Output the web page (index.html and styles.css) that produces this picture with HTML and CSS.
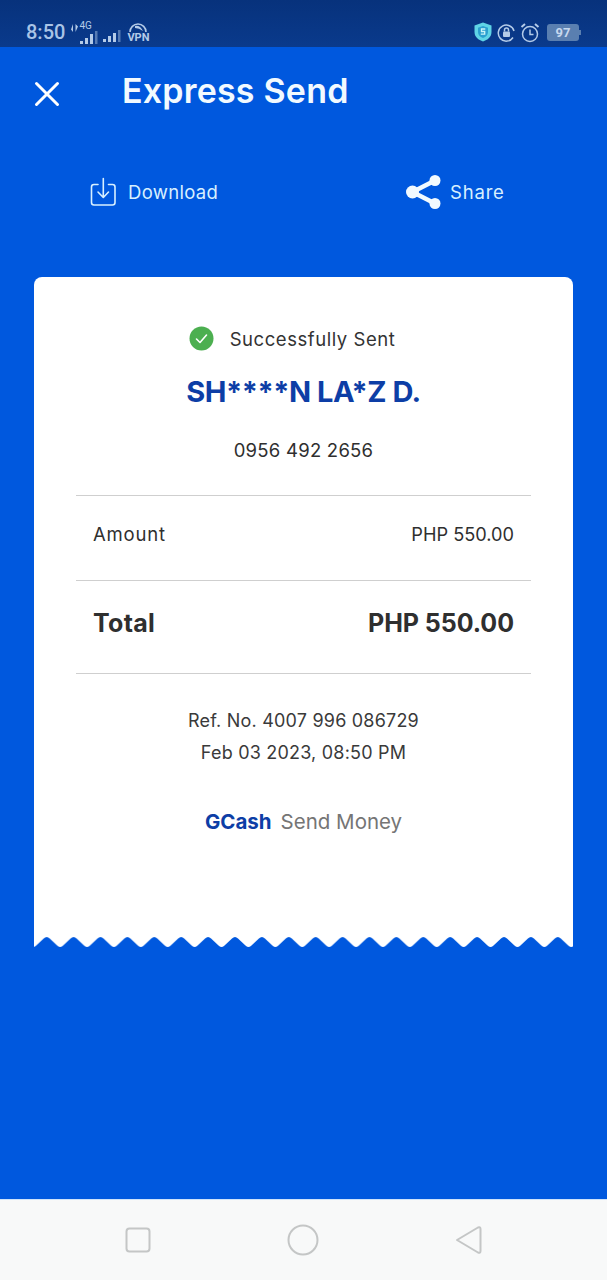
FILE: index.html
```html
<!DOCTYPE html>
<html lang="en">
<head>
    <meta charset="UTF-8">
    <meta name="viewport" content="width=device-width, initial-scale=1.0">
    <title>Express Send</title>
    <link rel="stylesheet" href="styles.css">
</head>
<body>
    <div class="status">
        <div class="status-left">
            <span class="time">8:50</span>
            <svg class="data-dot" width="7" height="8" viewBox="0 0 7 8"><path d="M2 0 V8 L0 5.500 Z M4.500 8 V0 L7 2.500 Z"/></svg>
            <span class="net">
                <span class="net-label">4G</span>
                <svg width="20" height="16" viewBox="0 0 20 16"><rect x="2" y="12" width="3" height="3"/><rect x="7" y="9" width="3" height="6"/><rect x="12" y="5" width="3" height="10"/><rect x="17" y="2" width="2.500" height="13" opacity=".45"/></svg>
            </span>
            <svg class="bars" width="20" height="14" viewBox="0 0 20 14"><rect x="0" y="10" width="3" height="3"/><rect x="5" y="7" width="3" height="6"/><rect x="10" y="4" width="3" height="9"/><rect x="15" y="1" width="2.500" height="12" opacity=".45"/></svg>
            <span class="vpn">
                <svg width="20" height="10" viewBox="0 0 20 10"><path d="M2 10 A8 8 0 0 1 18 10" fill="none" stroke="currentColor" stroke-width="1.600"/><path d="M7 4 Q12 3 15 9 Q11 6 7 6 Z" fill="currentColor"/></svg>
                <span class="vpn-label">VPN</span>
            </span>
        </div>
        <div class="status-right">
            <svg width="20" height="22" viewBox="0 0 20 22"><path d="M10 1.500 L18.500 4.500 V11 C18.500 16 14.500 19 10 20.500 C5.500 19 1.500 16 1.500 11 V4.500 Z" fill="#5fd4e6"/><path d="M10 5 L15 6.800 V11 C15 14 13 15.800 10 17 C7 15.800 5 14 5 11 V6.800 Z" fill="#2a9fd0"/><path d="M12.300 8 H8.500 V10.500 H11.700 V13.200 H7.800" fill="none" stroke="#c9f3f8" stroke-width="1.300"/></svg>
            <svg width="19" height="19" viewBox="0 0 19 19" fill="none" stroke="#b4cbe8" stroke-width="1.500"><path d="M16 14.500 A8 8 0 1 1 17 8"/><rect x="6" y="8.500" width="7" height="5.500" rx="1" fill="#b4cbe8" stroke="none"/><path d="M7.500 8.500 V7 A2 2 0 0 1 11.500 7 V8.500"/></svg>
            <svg width="20" height="21" viewBox="0 0 20 21" fill="none" stroke="#b4cbe8" stroke-width="1.500"><circle cx="10" cy="12" r="7.500"/><path d="M10 7.500 V12.500 H13.500"/><path d="M1.500 5 L5 2 M18.500 5 L15 2" stroke-width="2"/></svg>
            <span class="battery"><span class="battery-level">97</span><span class="battery-tip"></span></span>
        </div>
    </div>

    <main class="screen">
        <header class="title-row">
            <button class="close" aria-label="Close">
                <svg width="26" height="26" viewBox="0 0 26 26" fill="none" stroke="#fff" stroke-width="3" stroke-linecap="round"><path d="M2.500 2.500 L23.500 23.500 M23.500 2.500 L2.500 23.500"/></svg>
            </button>
            <h1>Express Send</h1>
        </header>

        <div class="actions">
            <div class="action action-download">
                <svg width="28" height="30" viewBox="0 0 28 30" fill="none" stroke="#d8f0ff" stroke-width="1.600" stroke-linecap="round" stroke-linejoin="round"><path d="M8 7.500 H4 A2.500 2.500 0 0 0 1.500 10 V25.500 A2.500 2.500 0 0 0 4 28 H22.500 A2.500 2.500 0 0 0 25 25.500 V10 A2.500 2.500 0 0 0 22.500 7.500 H18.500"/><path d="M13.300 1.500 V20 M8 15 L13.300 20.500 L18.500 15"/></svg>
                <span>Download</span>
            </div>
            <div class="action action-share">
                <svg width="36" height="34" viewBox="0 0 36 34" fill="#f2faff"><circle cx="6.500" cy="17" r="6.500"/><circle cx="29" cy="5.500" r="5.500"/><circle cx="29" cy="28.500" r="5.500"/><path d="M6.500 17 L29 5.500 M6.500 17 L29 28.500" stroke="#f2faff" stroke-width="4.500"/></svg>
                <span>Share</span>
            </div>
        </div>

        <section class="receipt">
            <div class="receipt-body">
                <div class="sent">
                    <svg width="25" height="25" viewBox="0 0 25 25"><circle cx="12.500" cy="12.500" r="12" fill="#4caf50"/><path d="M7.500 13 L11 16.500 L17.500 9" fill="none" stroke="#fff" stroke-width="1.600" stroke-linecap="round" stroke-linejoin="round"/></svg>
                    <span>Successfully Sent</span>
                </div>
                <div class="name">SH****N LA*Z D.</div>
                <div class="phone">0956 492 2656</div>

                <div class="row row-amount">
                    <span class="row-label">Amount</span>
                    <span class="row-value">PHP 550.00</span>
                </div>
                <div class="row row-total">
                    <span>Total</span>
                    <span class="total-value">PHP 550.00</span>
                </div>

                <div class="ref">
                    <div>Ref. No. 4007 996 086729</div>
                    <div>Feb 03 2023, 08:50 PM</div>
                </div>
                <div class="brand"><b>GCash</b><span>Send Money</span></div>
            </div>
            <svg class="tear" width="539" height="11" viewBox="0 0 539 11">
                <defs>
                    <pattern id="teeth" x="12.700" y="0" width="26.900" height="11" patternUnits="userSpaceOnUse">
                        <path d="M0 0 Q1.500 0 3 1.500 L11 9 Q13.450 11 15.900 9 L23.900 1.500 Q25.400 0 26.900 0 Z" fill="#fff"/>
                    </pattern>
                </defs>
                <rect width="539" height="11" fill="url(#teeth)"/>
            </svg>
        </section>
    </main>

    <nav class="navbar">
        <svg width="26" height="26" viewBox="0 0 26 26"><rect x="1.500" y="1.500" width="23" height="23" rx="3" fill="none" stroke="#c4c6c6" stroke-width="2"/></svg>
        <svg width="32" height="32" viewBox="0 0 32 32"><circle cx="16" cy="16" r="14.500" fill="none" stroke="#c4c6c6" stroke-width="2"/></svg>
        <svg width="27" height="30" viewBox="0 0 27 30"><path d="M2 15 L23 2.500 Q25.500 1.500 25.500 4 V26 Q25.500 28.500 23 27.500 Z" fill="none" stroke="#c4c6c6" stroke-width="2" stroke-linejoin="round"/></svg>
    </nav>
</body>
</html>
```

FILE: styles.css
```css
* {
    box-sizing: border-box;
}
body {
    margin: 0;
    width: 607px;
    height: 1280px;
    overflow: hidden;
    display: flex;
    flex-direction: column;
    font-family: Inter, "Open Sans", sans-serif;
    background: #0058de;
}
.status {
    height: 47px;
    flex: none;
    background: linear-gradient(to bottom, #07327c, #0a3a8c);
    display: flex;
    justify-content: space-between;
    align-items: flex-end;
    padding: 0 26px 2px 26px;
    color: #a9c4e6;
}
.status-left, .status-right {
    display: flex;
    align-items: center;
}
.status-left svg {
    fill: #b4cbe8;
}
.time {
    font-family: Roboto, sans-serif;
    font-size: 20px;
    line-height: 26px;
    font-weight: 500;
    color: #a9c4e6;
}
.data-dot {
    margin: 0 0 8px 6px;
}
.net {
    position: relative;
    display: flex;
    align-items: flex-end;
    height: 26px;
}
.net-label {
    position: absolute;
    left: 1px;
    top: 1px;
    font-family: Roboto, sans-serif;
    font-size: 10px;
    color: #b4cbe8;
}
.bars {
    margin-left: 5px;
    margin-top: 8px;
}
.vpn {
    display: flex;
    flex-direction: column;
    align-items: center;
    margin-left: 4px;
    color: #b4cbe8;
}
.vpn-label {
    font-family: Roboto, sans-serif;
    font-size: 11px;
    line-height: 11px;
    font-weight: 700;
}
.status-right {
    gap: 4px;
    margin-bottom: 2px;
}
.battery {
    display: flex;
    align-items: center;
    margin-left: 3px;
}
.battery-level {
    width: 32px;
    height: 17px;
    background: #5a7fb0;
    border-radius: 3px;
    color: #c6d8ee;
    font-family: Roboto, sans-serif;
    font-weight: 700;
    font-size: 13px;
    line-height: 17px;
    text-align: center;
}
.battery-tip {
    width: 2px;
    height: 5px;
    background: #5a7fb0;
}
.screen {
    flex: 1;
    background: #0058de;
    padding: 0 34px;
    min-height: 0;
}
.title-row {
    display: flex;
    align-items: center;
    height: 89px;
}
.close {
    background: none;
    border: none;
    padding: 0;
    margin-top: 5px;
    display: flex;
}
h1 {
    margin: -2px 0 0 62px;
    color: #f2faff;
    font-size: 34px;
    font-weight: 600;
    letter-spacing: 0.200px;
}
.actions {
    display: flex;
    align-items: center;
    height: 58px;
    margin-top: 27px;
    color: #d8f0ff;
    font-size: 18.500px;
}
.action {
    display: flex;
    align-items: center;
    letter-spacing: 0.300px;
}
.action-download {
    margin-left: 56px;
    gap: 10px;
}
.action-share {
    margin-left: 188px;
    gap: 8px;
}
.action-share span {
    letter-spacing: 0.800px;
}
.receipt {
    margin-top: 56px;
    width: 539px;
}
.receipt-body {
    background: #fff;
    border-radius: 8px 8px 0 0;
    height: 660px;
    padding: 49px 42px 0 42px;
    color: #2f2f2f;
    text-align: center;
}
.tear {
    display: block;
}
.sent {
    display: flex;
    justify-content: center;
    align-items: center;
    gap: 16px;
    font-size: 18.500px;
    letter-spacing: 0.550px;
    color: #333;
    margin-right: 23px;
}
.name {
    margin-top: 22px;
    font-size: 29px;
    line-height: 38px;
    font-weight: 700;
    letter-spacing: -0.450px;
    color: #0d3ea6;
}
.phone {
    margin-top: 27px;
    font-size: 18.500px;
    line-height: 24px;
    letter-spacing: 0.250px;
}
.row {
    display: flex;
    justify-content: space-between;
    align-items: center;
    padding: 0 17px;
    border-top: 1.500px solid #cfcfcf;
}
.row-amount {
    margin-top: 33px;
    height: 85px;
    padding-bottom: 9px;
    font-size: 18.500px;
}
.row-label {
    letter-spacing: 0.800px;
}
.row-value {
    font-size: 18.200px;
}
.row-total {
    height: 94px;
    padding-bottom: 9px;
    font-size: 25px;
    font-weight: 700;
    border-bottom: 1.500px solid #cfcfcf;
    letter-spacing: 0.300px;
}
.total-value {
    letter-spacing: -0.050px;
}
.ref {
    margin-top: 31px;
    font-size: 18px;
    line-height: 32px;
    letter-spacing: 0.200px;
    color: #3a3a3a;
}
.brand {
    margin-top: 39px;
    font-size: 20.500px;
    line-height: 28px;
    display: flex;
    justify-content: center;
    gap: 9px;
}
.brand b {
    color: #0d3ea6;
}
.brand span {
    color: #757575;
}
.navbar {
    height: 81px;
    flex: none;
    background: #f8f9f9;
    border-top: 1px solid #cfe3fb;
    display: flex;
    align-items: center;
    padding: 0 125px;
    justify-content: space-between;
}
```
